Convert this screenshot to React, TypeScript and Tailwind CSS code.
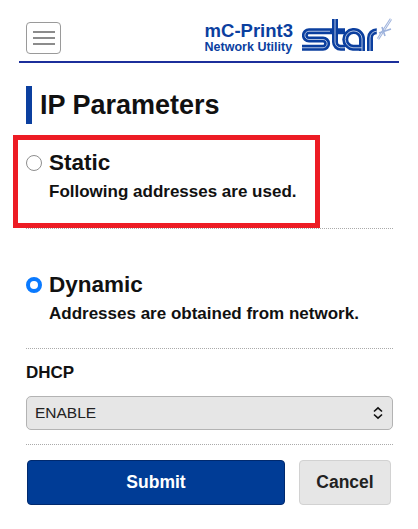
import React from 'react';

const FONT = 'font-["Liberation_Sans",Arial,sans-serif]';

function StarLogo() {
  const s = 'M28 13.250H7a4.100 4.100 0 0 0 0 8.250h14a4.100 4.100 0 0 1 0 8.250H0';
  const t = 'M33 1v23a5.750 5.750 0 0 0 5.750 5.750H43';
  const a = 'M60 33V21a8 8 0 0 0-8-8h-1a8.400 8.400 0 0 0 0 16.750h9';
  const r = 'M68 33V20a6.750 6.750 0 0 1 6.750-6.750';
  return (
    <svg width="90" height="34" viewBox="0 0 90 34" fill="none" stroke="#0b3f9f" strokeWidth="6">
      <path d={s} />
      <path d={t} />
      <path d="M28 13.250h15" />
      <path d={a} />
      <path d={r} />
      {/* thin white inline through the letters */}
      <g stroke="#fff" strokeWidth="0.9" opacity="0.75">
        <path d={s} />
        <path d={t} />
        <path d={a} />
        <path d={r} />
      </g>
      {/* swoosh */}
      <path d="M76 21l13-20" stroke="#9db2dc" strokeWidth="2.600" />
      <path d="M76 21l13-20" stroke="#e4eaf6" strokeWidth="1" />
      <path d="M80 9l3 9M77 15l12-4" stroke="#9db2dc" strokeWidth="1.600" />
    </svg>
  );
}

function Radio({ checked }: { checked?: boolean }) {
  return checked ? (
    <span className="block w-4 h-4 rounded-full border-[4px] border-[#0a7aff] bg-white shrink-0 mt-[7px]" />
  ) : (
    <span className="block w-4 h-4 rounded-full border border-[#8e8e8e] bg-white shrink-0 mt-[7px]" />
  );
}

function Option({ title, desc, checked }: { title: string; desc: string; checked?: boolean }) {
  return (
    <div className="flex gap-[7px]">
      <Radio checked={checked} />
      <div>
        <div className="text-[22.5px] leading-[30px] font-bold text-[#111]">{title}</div>
        <div className="text-[17px] leading-[20px] mt-[4px] font-bold text-[#111]">{desc}</div>
      </div>
    </div>
  );
}

export default function App() {
  return (
    <div className={`relative w-[418px] h-[529px] bg-white overflow-hidden ${FONT}`}>
      {/* header */}
      <div className="mx-[19px] h-[63px] border-b-2 border-[#1c2f9b] flex items-start justify-between">
        <button className="ml-[7px] mt-[22px] w-[35px] h-[32px] rounded-[4px] border border-[#9a9a9a] flex flex-col items-center justify-center gap-[4px]">
          <span className="block w-[22px] h-[2px] bg-[#8c8c8c]" />
          <span className="block w-[22px] h-[2px] bg-[#8c8c8c]" />
          <span className="block w-[22px] h-[2px] bg-[#8c8c8c]" />
        </button>
        <div className="flex items-start gap-[9px] mr-[7px] mt-[18px]">
          <div className="text-[#0b3f9f] font-bold mt-[4px]">
            <div className="text-[18.5px] leading-[17px]">mC-Print3</div>
            <div className="text-[12.5px] leading-[15px] mt-[1px]">Network Utility</div>
          </div>
          <StarLogo />
        </div>
      </div>

      <div className="mx-[26px] w-[367px]">
        {/* title */}
        <div className="mt-[23px] flex items-center gap-[8px] h-[38px]">
          <span className="block w-[6px] h-[38px] bg-[#0b3f9f]" />
          <h1 className="text-[27px] font-bold text-[#111]">IP Parameters</h1>
        </div>

        <div className="mt-[24px] pb-[10px] h-[70px] box-content border-b border-dotted border-[#aaa]">
          <Option title="Static" desc="Following addresses are used." />
        </div>

        <div className="mt-[41px] h-[79px] border-b border-dotted border-[#aaa]">
          <Option title="Dynamic" desc="Addresses are obtained from network." checked />
        </div>

        <div className="mt-[14px] text-[17px] leading-[20px] font-bold text-[#111]">DHCP</div>

        <div className="mt-[13px] h-[34px] rounded-[5px] border border-[#b3b3b3] bg-[#e6e6e6] flex items-center justify-between pl-[8px] pr-[8px]">
          <span className="text-[15.5px] text-[#222]">ENABLE</span>
          <svg width="12" height="14" viewBox="0 0 12 14" fill="none" stroke="#111" strokeWidth="1.6">
            <path d="M2 5.500L6 1.800l4 3.700M2 8.500l4 3.700 4-3.700" />
          </svg>
        </div>

        <div className="mt-[14px] border-b border-dotted border-[#aaa]" />

        <div className="mt-[15px] flex justify-between pl-[1px] pr-[2px]">
          <button className="w-[258px] h-[45px] rounded-[4px] bg-[#003c96] border border-[#00296e] text-white text-[17.5px] font-bold">
            Submit
          </button>
          <button className="w-[92px] h-[45px] rounded-[4px] bg-[#e6e6e6] border border-[#d2d2d2] text-[#222] text-[17.5px] font-bold">
            Cancel
          </button>
        </div>
      </div>

      {/* red highlight */}
      <div className="absolute left-[13px] top-[135px] w-[307px] h-[93px] border-[5px] border-[#ed1c24] pointer-events-none" />
    </div>
  );
}
